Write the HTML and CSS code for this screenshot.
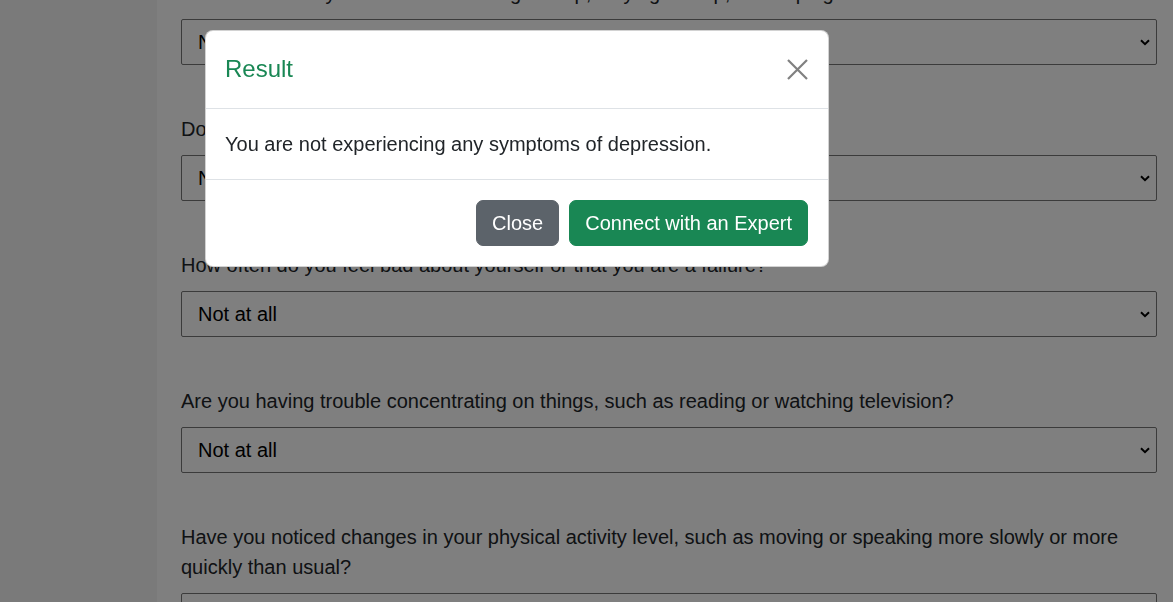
FILE: index.html
```html
<!DOCTYPE html>
<html lang="en">
<head>
<meta charset="utf-8">
<title>Depression Screening</title>
<link rel="stylesheet" href="styles.css">
</head>
<body>
<div class="page">
  <main class="card">
    <form class="quiz">
      <div class="question">
        <label class="q-label" for="q1">How often have you had trouble falling asleep, staying asleep, or sleeping too much?</label>
        <select class="q-select" id="q1"><option>Not at all</option><option>Several days</option></select>
      </div>
      <div class="question">
        <label class="q-label" for="q2">Do you feel tired or have little energy?</label>
        <select class="q-select" id="q2"><option>Not at all</option><option>Several days</option></select>
      </div>
      <div class="question">
        <label class="q-label" for="q3">How often do you feel bad about yourself or that you are a failure?</label>
        <select class="q-select" id="q3"><option>Not at all</option><option>Several days</option></select>
      </div>
      <div class="question">
        <label class="q-label" for="q4">Are you having trouble concentrating on things, such as reading or watching television?</label>
        <select class="q-select" id="q4"><option>Not at all</option><option>Several days</option></select>
      </div>
      <div class="question">
        <label class="q-label" for="q5">Have you noticed changes in your physical activity level, such as moving or speaking more slowly or more quickly than usual?</label>
        <select class="q-select" id="q5"><option>Not at all</option><option>Several days</option></select>
      </div>
    </form>
  </main>
</div>

<div class="backdrop"></div>
<div class="modal" role="dialog" aria-labelledby="modal-title">
  <div class="modal-header">
    <h5 class="modal-title" id="modal-title">Result</h5>
    <button class="btn-close" type="button" aria-label="Close">
      <svg width="21" height="21" viewBox="0 0 21 21" aria-hidden="true"><path d="M1 1 L20 20 M20 1 L1 20" stroke="#808080" stroke-width="2.2" fill="none"/></svg>
    </button>
  </div>
  <div class="modal-body">You are not experiencing any symptoms of depression.</div>
  <div class="modal-footer">
    <button class="btn btn-secondary" type="button">Close</button>
    <button class="btn btn-success" type="button">Connect with an Expert</button>
  </div>
</div>
</body>
</html>
```
FILE: styles.css
```css
html, body {
  margin: 0;
  padding: 0;
}
body {
  background: #f5f5f5;
  font-family: "Liberation Sans", Arial, sans-serif;
  color: #212529;
  height: 602px;
  overflow: hidden;
}
.page {
  padding-left: 157px;
}
.card {
  width: 1000px;
  background: #ffffff;
  padding: 0 24px;
  margin-top: -22px;
  min-height: 700px;
}
.quiz {
  display: flex;
  flex-direction: column;
  gap: 49px;
}
.question {
  display: flex;
  flex-direction: column;
}
.q-label {
  font-size: 20px;
  line-height: 30px;
  margin-bottom: 11px;
  color: #212529;
}
.q-select {
  appearance: none;
  -webkit-appearance: none;
  width: 976px;
  height: 46px;
  padding: 0 16px;
  font-family: "Liberation Sans", Arial, sans-serif;
  font-size: 20px;
  color: #000;
  background-color: #fff;
  border: 1px solid #767676;
  border-radius: 2px;
  background-image: url("data:image/svg+xml,%3Csvg xmlns='http://www.w3.org/2000/svg' width='10' height='7' viewBox='0 0 10 7'%3E%3Cpath d='M1 1.2 L5 5.2 L9 1.2' stroke='%23000' stroke-width='2' fill='none'/%3E%3C/svg%3E");
  background-repeat: no-repeat;
  background-position: right 6px center;
  background-size: 10px 7px;
}
.backdrop {
  position: fixed;
  inset: 0;
  background: rgba(0, 0, 0, 0.5);
}
.modal {
  position: fixed;
  left: 205px;
  top: 30px;
  width: 622px;
  background: #fff;
  border: 1px solid rgba(0, 0, 0, 0.175);
  border-radius: 8px;
  display: flex;
  flex-direction: column;
}
.modal-header {
  display: flex;
  align-items: center;
  justify-content: space-between;
  padding: 24px 20px 24px 19px;
  border-bottom: 1px solid #dee2e6;
}
.modal-title {
  margin: 0;
  font-size: 24px;
  line-height: 28.8px;
  font-weight: 400;
  color: #198754;
}
.btn-close {
  border: 0;
  background: transparent;
  padding: 0;
  width: 21px;
  height: 21px;
  display: flex;
  cursor: pointer;
}
.modal-body {
  padding: 20px 20px 20px 19px;
  font-size: 20px;
  line-height: 30px;
  color: #212529;
}
.modal-footer {
  display: flex;
  justify-content: flex-end;
  gap: 10px;
  padding: 20px 20px 20px 19px;
  border-top: 1px solid #dee2e6;
}
.btn {
  font-family: "Liberation Sans", Arial, sans-serif;
  font-size: 20px;
  line-height: 30px;
  padding: 7px 15px;
  border: 1px solid transparent;
  border-radius: 7px;
  color: #fff;
  cursor: pointer;
}
.btn-secondary {
  background: #5c636a;
  border-color: #5c636a;
}
.btn-success {
  background: #198754;
  border-color: #198754;
}
```
